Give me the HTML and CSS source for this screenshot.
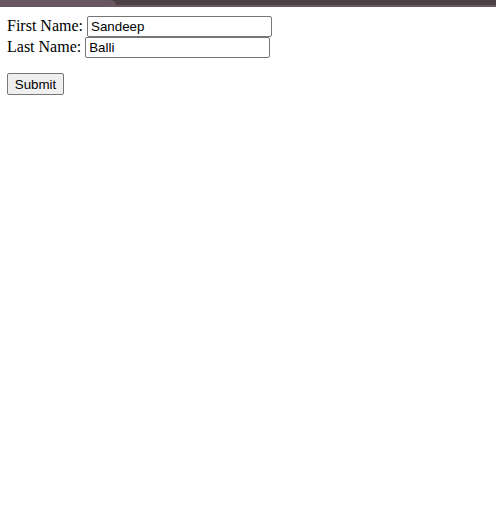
FILE: index.html
```html
<!DOCTYPE html>
<html>
<head>
<meta charset="utf-8">
<link rel="stylesheet" href="styles.css">
</head>
<body>
<div class="chrome">
  <div class="tab"></div>
  <div class="strip"></div>
</div>
<form class="form">
  <div class="row"><label>First Name:</label> <input type="text" value="Sandeep"></div>
  <div class="row"><label>Last Name:</label> <input type="text" value="Balli"></div>
  <div class="actions"><button type="button">Submit</button></div>
</form>
</body>
</html>
```
FILE: styles.css
```css
html, body {
  margin: 0;
  padding: 0;
  background: #ffffff;
}
body {
  font-family: "Liberation Serif", "Times New Roman", serif;
  font-size: 16px;
  color: #000;
}
.chrome {
  display: flex;
  height: 7px;
  background: #4d4146;
}
.tab {
  width: 116px;
  background: #6a5860;
  border-top-right-radius: 6px;
}
.strip {
  flex: 1;
  align-self: flex-end;
  height: 2px;
  background: #6a5860;
}
.form {
  display: flex;
  flex-direction: column;
  padding: 8px 7px;
  margin: 0;
}
.row {
  display: block;
  height: 21px;
  line-height: 21px;
}
.row input {
  font-family: "Liberation Sans", Arial, sans-serif;
  font-size: 13.333px;
  width: 185px;
  height: 21px;
  box-sizing: border-box;
  padding: 1px 3px;
  border: 1px solid #767676;
  border-radius: 2px;
  vertical-align: baseline;
}
.actions {
  margin-top: 16px;
}
.actions button {
  font-family: "Liberation Sans", Arial, sans-serif;
  font-size: 13.333px;
  width: 57px;
  height: 22px;
  padding: 1px 6px;
  background: #efefef;
  border: 1px solid #767676;
  border-radius: 2px;
  color: #000;
}
```
